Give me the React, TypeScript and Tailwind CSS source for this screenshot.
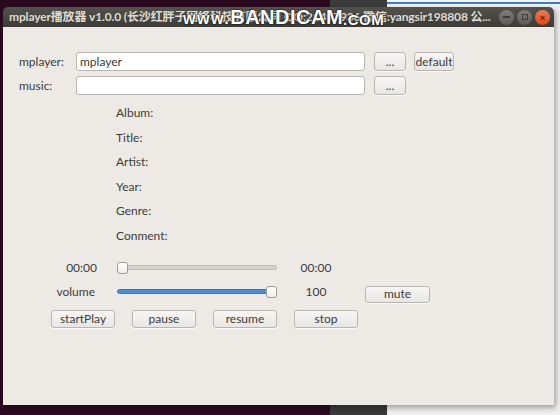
const font = { fontFamily: 'Lato, "Noto Sans", "Noto Sans CJK SC", sans-serif' }

function Btn({ label, w, h = 'h-[19px]', extra = '' }: { label: string; w: string; h?: string; extra?: string }) {
  return (
    <button
      className={`${w} ${h} ${extra} shrink-0 flex items-center justify-center rounded-[3px] border border-[#b9b5b0] bg-gradient-to-b from-[#f7f6f5] to-[#e9e7e4] text-[12px] text-[#3c3c3c] leading-none shadow-[0_1px_0_rgba(255,255,255,0.8)]`}
    >
      {label}
    </button>
  )
}

function Slider({ value, blue }: { value: number; blue?: boolean }) {
  return (
    <div className="relative w-[160px] h-[12px] flex items-center shrink-0">
      <div
        className={`w-full h-[5px] rounded-full border ${blue ? 'bg-[#4a90d0] border-[#3a7bbf]' : 'bg-[#d6d2cd] border-[#bdb9b4]'}`}
      />
      <div
        className="absolute top-0 w-[11px] h-[12px] rounded-[3px] border border-[#9e9a95] bg-gradient-to-b from-white to-[#efedea]"
        style={{ left: `${value * 149}px` }}
      />
    </div>
  )
}

const tags = ['Album:', 'Title:', 'Artist:', 'Year:', 'Genre:', 'Conment:']

export default function App() {
  return (
    <div className="relative w-[560px] h-[415px] overflow-hidden bg-[#2b0a20]" style={font}>
      {/* windows behind */}
      <div className="absolute left-[330px] top-0 w-[57px] h-[415px] bg-[#3a3b3b]" />
      <div className="absolute left-[387px] top-0 w-[173px] h-[415px] bg-[#f2f2f2]">
        <div className="mt-[2px] h-[2px] w-full bg-[#3b7dc4]" />
      </div>

      {/* main window */}
      <div className="relative ml-[3px] mt-[7px] w-[551px] h-[398px] flex flex-col shadow-[2px_3px_6px_rgba(0,0,0,0.35)]">
        {/* title bar */}
        <div className="relative h-[20px] shrink-0 flex items-center rounded-t-[5px] bg-gradient-to-b from-[#53524d] to-[#3c3b37] pl-[6px] pr-[4px]">
          <span className="flex-1 whitespace-nowrap overflow-hidden text-[12px] font-bold tracking-[-0.15px] text-[#dfdbd2] leading-none">
            mplayer播放器 v1.0.0 (长沙红胖子网络科技有限公司 QQ:21497936 微信:yangsir198808 公...
          </span>
          <div className="flex items-center gap-[3px] ml-[4px]">
            <div className="w-[15px] h-[15px] rounded-full bg-gradient-to-b from-[#7f7e79] to-[#5c5b57] flex items-center justify-center">
              <div className="w-[7px] h-[2px] bg-[#3c3b37]" />
            </div>
            <div className="w-[15px] h-[15px] rounded-full bg-gradient-to-b from-[#7f7e79] to-[#5c5b57] flex items-center justify-center">
              <div className="w-[6px] h-[6px] border border-[#3c3b37]" />
            </div>
            <div className="w-[15px] h-[15px] rounded-full bg-gradient-to-b from-[#f47a4f] to-[#d9461b] flex items-center justify-center text-[10px] font-bold text-[#5a2010] leading-none">
              ×
            </div>
          </div>
          {/* recorder watermark */}
          <div className="absolute left-[180px] top-[0px] flex items-end text-white leading-none [text-shadow:0_0_2px_#000,0_0_1px_#000]" style={{ fontFamily: '"Liberation Sans", Arial, sans-serif' }}>
            <span className="text-[16px] font-bold tracking-[1.5px]">www.</span>
            <span className="text-[20px] font-black tracking-[0.5px]">BANDICAM</span>
            <span className="text-[15px] font-bold tracking-[0.5px]">.COM</span>
          </div>
        </div>

        {/* body */}
        <div className="flex-1 bg-[#edeae6] text-[12px] text-[#3c3c3c] pt-[25px]">
          <div className="flex items-center h-[19px]">
            <span className="w-[73px] pl-[16px] shrink-0">mplayer:</span>
            <div className="w-[289px] h-[19px] rounded-[3px] border border-[#b9b5b0] bg-white px-[3px] flex items-center">
              mplayer
            </div>
            <Btn label="..." w="w-[32px]" extra="ml-[9px]" />
            <Btn label="default" w="w-[40px]" extra="ml-[8px]" />
          </div>
          <div className="flex items-center h-[19px] mt-[5px]">
            <span className="w-[73px] pl-[16px] shrink-0">music:</span>
            <div className="w-[289px] h-[19px] rounded-[3px] border border-[#b9b5b0] bg-white" />
            <Btn label="..." w="w-[32px]" extra="ml-[9px]" />
          </div>

          <div className="mt-[6px] pl-[113px] flex flex-col">
            {tags.map((t) => (
              <div key={t} className="h-[24.6px] leading-[24.6px]">{t}</div>
            ))}
          </div>

          <div className="flex items-center h-[18px] mt-[10px]">
            <span className="w-[94px] text-right shrink-0">00:00</span>
            <div className="ml-[20px]"><Slider value={0} /></div>
            <span className="ml-[13px] w-[52px] text-center">00:00</span>
          </div>
          <div className="flex items-start mt-[6px]">
            <span className="w-[92px] h-[18px] leading-[18px] text-right shrink-0">volume</span>
            <div className="ml-[22px] h-[18px] flex items-center"><Slider value={1} blue /></div>
            <span className="ml-[13px] w-[52px] h-[18px] leading-[18px] text-center">100</span>
            <Btn label="mute" w="w-[65px]" h="h-[17px]" extra="ml-[23px] mt-[3px]" />
          </div>
          <div className="flex items-center mt-[7px] pl-[48px] gap-[17px]">
            <Btn label="startPlay" w="w-[64px]" h="h-[18px]" />
            <Btn label="pause" w="w-[64px]" h="h-[18px]" />
            <Btn label="resume" w="w-[64px]" h="h-[18px]" />
            <Btn label="stop" w="w-[64px]" h="h-[18px]" />
          </div>
        </div>
      </div>
    </div>
  )
}
